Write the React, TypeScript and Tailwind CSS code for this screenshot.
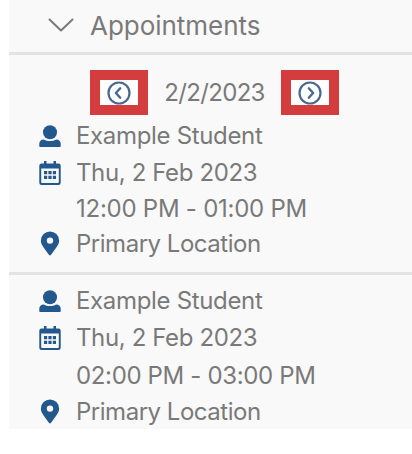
import clsx from 'clsx'

interface Appointment {
  id: number
  student: string
  date: string
  time: string
  timeClass: string
  location: string
}

const APPOINTMENTS: Appointment[] = [
  {
    id: 1,
    student: 'Example Student',
    date: 'Thu, 2 Feb 2023',
    time: '12:00 PM - 01:00 PM',
    timeClass: 'h-[34px] tracking-[-0.25px]',
    location: 'Primary Location',
  },
  {
    id: 2,
    student: 'Example Student',
    date: 'Thu, 2 Feb 2023',
    time: '02:00 PM - 03:00 PM',
    timeClass: 'h-[37px] tracking-[-0.35px]',
    location: 'Primary Location',
  },
]

function UserIcon() {
  return (
    <svg className="h-[22px] w-[22px]" viewBox="0 0 22 22" fill="currentColor">
      <circle cx="11" cy="7.200" r="7" />
      <path d="M.3 21.200v-2.300c0-2.600 1.600-4.300 4.600-4.300 1.800 1 3.900 1.500 6.100 1.500s4.300-.5 6.100-1.500c3 0 4.600 1.700 4.600 4.300v2.300c0 .5-.3.800-.8.800H1.100c-.5 0-.8-.3-.8-.8z" />
    </svg>
  )
}

function CalendarIcon() {
  return (
    <svg className="h-6 w-[22px]" viewBox="0 0 22 24" fill="currentColor">
      <path
        fillRule="evenodd"
        d="M5 0h2.500v2.500h7V0H17v2.500h2.500A2.200 2.200 0 0 1 21.700 4.700v17a2.200 2.200 0 0 1-2.200 2.200h-17a2.200 2.200 0 0 1-2.200-2.200v-17a2.200 2.200 0 0 1 2.200-2.200H5zM2.200 7.500v13.700c0 .5.300.8.800.8h16c.5 0 .8-.3.800-.8V7.500z"
      />
      <path d="M5 10h3.200v3.200H5zm4.400 0h3.200v3.200H9.400zm4.400 0H17v3.200h-3.200zM5 14.800h3.200V18H5zm4.400 0h3.200V18H9.400zm4.400 0H17V18h-3.200z" />
    </svg>
  )
}

function PinIcon() {
  return (
    <svg className="h-[25px] w-[22px]" viewBox="0 0 22 25" fill="currentColor">
      <path
        fillRule="evenodd"
        d="M11 .4a9.100 9.100 0 0 0-9.100 9.100c0 3.700 1.300 5 8.200 14.600.4.600 1.400.600 1.800 0 6.900-9.600 8.200-10.900 8.200-14.600A9.100 9.100 0 0 0 11 .4zM11 6.400a3.200 3.200 0 1 1 0 6.400 3.200 3.200 0 0 1 0-6.400z"
      />
    </svg>
  )
}

function DayButton({ direction }: { direction: 'prev' | 'next' }) {
  return (
    <button
      aria-label={direction === 'prev' ? 'Previous day' : 'Next day'}
      className="flex h-[45px] w-[58px] items-center justify-center border-10 border-[#d33d3d] bg-white text-[#49688f]"
    >
      <svg
        className={clsx('h-6 w-6 shrink-0', direction === 'next' && 'rotate-180')}
        viewBox="0 0 24 24"
        fill="none"
        stroke="currentColor"
      >
        <circle cx="12" cy="12" r="10.500" strokeWidth="2.200" />
        <path d="M13.200 7.300 8.900 12l4.300 4.700" strokeWidth="2.400" strokeLinecap="round" strokeLinejoin="round" />
      </svg>
    </button>
  )
}

function AppointmentDetails({ appointment }: { appointment: Appointment }) {
  const { student, date, time, timeClass, location } = appointment

  return (
    <div className="pl-[30px]">
      <div className="flex h-[37px] items-center gap-[15px]">
        <span className="text-[#23588d]"><UserIcon /></span>
        <span className="tracking-[-0.33px]">{student}</span>
      </div>
      <div className="flex h-[38px] items-center gap-[15px]">
        <span className="text-[#23588d]"><CalendarIcon /></span>
        <span className="tracking-[-0.38px]">{date}</span>
      </div>
      <div className={clsx('flex items-center pl-[37px]', timeClass)}>{time}</div>
      <div className="flex h-[35px] items-center gap-[15px]">
        <span className="text-[#23588d]"><PinIcon /></span>
        <span className="tracking-[-0.48px]">{location}</span>
      </div>
    </div>
  )
}

export default function App() {
  const [current, upcoming] = APPOINTMENTS

  return (
    <div className="h-[454px] overflow-hidden bg-white pl-[9px] font-['Inter',sans-serif] text-2xl/none whitespace-nowrap text-[#797979]">
      <div className="h-[429px] bg-[#f9f9f9]">
        <div className="flex h-[52px] items-center gap-4 pl-[39px]">
          <svg className="h-4 w-[26px]" viewBox="0 0 26 16" fill="none" stroke="currentColor">
            <path d="M1.500 1.500 13 12.500 24.500 1.500" strokeWidth="2" strokeLinecap="round" strokeLinejoin="round" />
          </svg>
          <h2 className="text-[26px] leading-none tracking-[-0.03px]">Appointments</h2>
        </div>

        <section className="h-[223px] border-y-3 border-[#e3e3e3] pt-[15px]">
          <div className="mb-0.5 flex items-center pl-[81px]">
            <DayButton direction="prev" />
            <span className="w-[133px] text-center tracking-[-0.65px]">2/2/2023</span>
            <DayButton direction="next" />
          </div>
          <AppointmentDetails appointment={current} />
        </section>

        <section className="pt-[7px]">
          <AppointmentDetails appointment={upcoming} />
        </section>
      </div>
    </div>
  )
}
